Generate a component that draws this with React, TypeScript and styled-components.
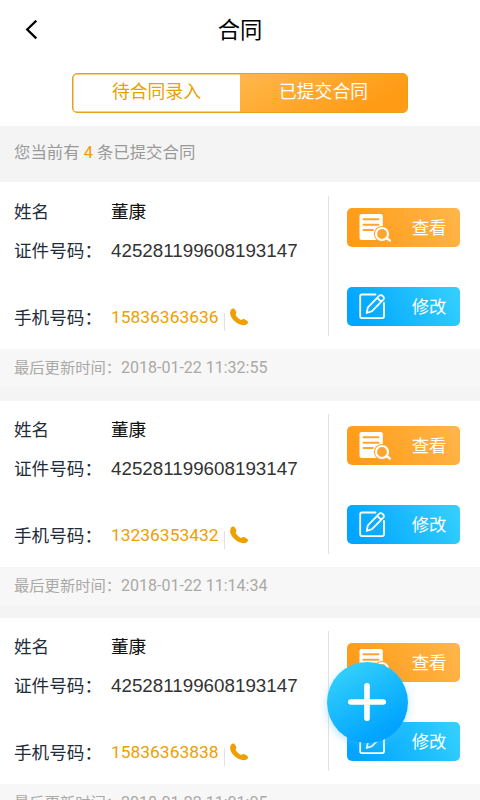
import React from 'react';
import styled, { createGlobalStyle } from 'styled-components';

const cjk = '"Noto Sans CJK SC", sans-serif';

const GlobalStyle = createGlobalStyle`
  * { box-sizing: border-box; }
  body { margin: 0; background: #fff; }
  button { border: 0; padding: 0; margin: 0; background: none; font: inherit; color: inherit; cursor: pointer; }
`;

const Screen = styled.div`
  position: relative;
  display: flex;
  flex-direction: column;
  width: 480px;
  height: 800px;
  overflow: hidden;
  background: #f4f4f4;
  font-family: Roboto, ${cjk};
`;

const Header = styled.header`
  display: grid;
  grid-template-columns: 80px 1fr 80px;
  align-items: center;
  flex: none;
  height: 60px;
  background: #fff;
`;

const BackButton = styled.button`
  display: flex;
  padding-left: 24px;
`;

const Title = styled.h1`
  margin: 0;
  padding-bottom: 4px;
  text-align: center;
  font: 400 22.3px/32px ${cjk};
  color: #000;
`;

const TabArea = styled.div`
  flex: none;
  height: 66px;
  padding: 13px 72px;
  background: #fff;
`;

const Tabs = styled.div`
  display: flex;
  height: 40px;
  border: 1px solid #e5a01c;
  border-radius: 5px;
  box-shadow: inset 0 0 0 0.5px #e5a01c;
  overflow: hidden;
`;

const Tab = styled.button<{ $active?: boolean }>`
  flex: 1;
  padding-bottom: 6px;
  font: 400 17.8px/32px ${cjk};
  color: ${(p) => (p.$active ? '#fff' : '#e9a000')};
  background: ${(p) => (p.$active ? 'linear-gradient(150deg, #ffb648 5%, #ff9b14 82%)' : 'transparent')};
`;

const Summary = styled.div`
  flex: none;
  height: 56px;
  padding: 15px 14px 0;
  font-size: 16.4px;
  line-height: 24px;
  color: #999;
  white-space: pre;
`;

const Count = styled.span`
  color: #f09c00;
`;

const Card = styled.article`
  flex: none;
  height: 217px;
`;

const CardBody = styled.div`
  display: flex;
  height: 166px;
  padding: 13px 20px 13px 14px;
  background: #fff;
`;

const ContractList = styled.main`
  flex: none;
  ${Card}:first-child { height: 219px; }
  ${Card}:first-child ${CardBody} { height: 167px; padding-top: 14px; }
`;

const Fields = styled.div`
  flex: 1;
  margin-right: -0.5px;
  border-right: 1px solid #e2e2e2;
`;

const Field = styled.div<{ $tall?: boolean }>`
  display: flex;
  align-items: center;
  height: 32px;
  margin-bottom: ${(p) => (p.$tall ? '35px' : '7px')};
`;

const Label = styled.span`
  width: 97px;
  padding-bottom: 2px;
  font: 400 17.6px/30px ${cjk};
  color: #1f2d3a;
`;

const Name = styled.span`
  padding-bottom: 2px;
  font: 400 17.6px/30px ${cjk};
  color: #111;
`;

const IdNumber = styled.span`
  font: 400 18.8px/32px "Liberation Sans", sans-serif;
  color: #333;
`;

const Phone = styled.span`
  padding-bottom: 2px;
  font: 400 17.4px/30px Roboto, sans-serif;
  color: #eea000;
`;

const CallButton = styled.button`
  display: flex;
  height: 18px;
  margin: 8px 0 0 5px;
  padding-left: 5px;
  border-left: 1px solid #e2e2e2;
  svg { margin-top: -5px; }
`;

const Actions = styled.div`
  display: flex;
  flex-direction: column;
  gap: 40px;
  padding: 12px 0 0 18.5px;
`;

const ActionButton = styled.button<{ $blue?: boolean }>`
  display: flex;
  align-items: center;
  justify-content: space-between;
  width: 113.5px;
  height: 39px;
  padding: 0 13.5px 1px 12px;
  border-radius: 5px;
  color: #fff;
  font: 400 17.4px/38px ${cjk};
  background: ${(p) =>
    p.$blue
      ? 'linear-gradient(60deg, #00a5ff 10%, #33cffc 95%)'
      : 'linear-gradient(60deg, #ff9b17 10%, #ffb548 95%)'};
`;

const Updated = styled.div`
  height: 38px;
  padding: 6px 14px 0;
  background: #f7f7f7;
  font-size: 16px;
  line-height: 26px;
  color: #aaa9a6;
  display: flex;
`;

const UpdatedLabel = styled.span`
  flex: none;
  width: 107px;
  margin-top: -2px;
  font-family: ${cjk};
  font-size: 15.3px;
  white-space: nowrap;
`;

const AddButton = styled.button`
  position: absolute;
  left: 326.5px;
  top: 661.5px;
  display: flex;
  align-items: center;
  justify-content: center;
  width: 81px;
  height: 81px;
  border-radius: 50%;
  background: linear-gradient(150deg, #32cffb 12%, #00a3ff 82%);
  box-shadow: 0 3px 8px rgba(80, 190, 255, 0.4);
`;

const BackIcon = () => (
  <svg width="14" height="20" viewBox="0 0 14 20" fill="none" stroke="#000" strokeWidth="2.3">
    <path d="M12.3.7 3.2 9.5l9.1 8.9" />
  </svg>
);

const PhoneIcon = () => (
  <svg width="18" height="18" viewBox="0 0 18 18" fill="#eea000">
    <path d="M1 1.7C1.7.6 3.300-.1 4.300.8l1.700 2.600c.6 1 .4 1.900-.1 2.500-.4.5-.3 1.200.2 1.900 1 1.500 2.300 2.700 3.900 3.700.8.5 1.500.5 2.100 0 .8-.6 1.600-.7 2.500-.2l2.700 1.600c1.300.9.5 2.600-.5 3.400-1.800 1.300-4.300 1.100-6.300.2C5.700 15 1.900 11.300.5 7.200-.1 5.400 0 3.300 1 1.700Z" />
  </svg>
);

const ViewIcon = () => (
  <svg width="33" height="30" viewBox="0 0 33 30" fill="none">
    <rect x=".5" y="2" width="23.300" height="26" rx="2" fill="#fff" />
    <path d="M4.500 7.200h15M4.500 12.700h15M4.500 18H14" stroke="#ffa52d" strokeWidth="1.900" strokeLinecap="round" />
    <circle cx="23" cy="22" r="8.100" fill="#ffa52d" />
    <circle cx="23" cy="22" r="6" stroke="#fff" strokeWidth="2.200" />
    <path d="m27.500 26 3.400 2.600" stroke="#fff" strokeWidth="2.400" strokeLinecap="round" />
  </svg>
);

const EditIcon = () => (
  <svg width="33" height="30" viewBox="0 0 33 30" fill="none" stroke="#fff" strokeWidth="1.800" strokeLinejoin="round">
    <path d="M16.500 3.500H3a1.800 1.800 0 0 0-1.800 1.800v20A1.800 1.800 0 0 0 3 27.100h20.200a1.800 1.800 0 0 0 1.800-1.800V12" strokeLinecap="round" />
    <path d="m7.700 22 1.200-5.700L20.300 4.700a2.100 2.100 0 0 1 3 0l1 1a2.100 2.100 0 0 1 0 3L13 20.200 7.700 22ZM18.300 6.800l4 4" />
  </svg>
);

const PlusIcon = () => (
  <svg width="40" height="40" viewBox="0 0 40 40" stroke="#fff" strokeWidth="5.600" strokeLinecap="round">
    <path d="M20 3.800v32.400M3.800 20h32.400" />
  </svg>
);

const contracts = [
  { phone: '15836363636', updated: '2018-01-22 11:32:55' },
  { phone: '13236353432', updated: '2018-01-22 11:14:34' },
  { phone: '15836363838', updated: '2018-01-22 11:01:05' },
];

export default function App() {
  return (
    <>
      <GlobalStyle />
      <Screen>
        <Header>
          <BackButton aria-label="返回"><BackIcon /></BackButton>
          <Title>合同</Title>
        </Header>
        <TabArea>
          <Tabs>
            <Tab>待合同录入</Tab>
            <Tab $active>已提交合同</Tab>
          </Tabs>
        </TabArea>
        <Summary>您当前有 <Count>4</Count> 条已提交合同</Summary>
        <ContractList>
          {contracts.map((c) => (
            <Card key={c.phone}>
              <CardBody>
                <Fields>
                  <Field>
                    <Label>姓名</Label>
                    <Name>董康</Name>
                  </Field>
                  <Field $tall>
                    <Label>证件号码：</Label>
                    <IdNumber>425281199608193147</IdNumber>
                  </Field>
                  <Field>
                    <Label>手机号码：</Label>
                    <Phone>{c.phone}</Phone>
                    <CallButton aria-label="拨打"><PhoneIcon /></CallButton>
                  </Field>
                </Fields>
                <Actions>
                  <ActionButton><ViewIcon />查看</ActionButton>
                  <ActionButton $blue><EditIcon />修改</ActionButton>
                </Actions>
              </CardBody>
              <Updated>
                <UpdatedLabel>最后更新时间：</UpdatedLabel>
                {c.updated}
              </Updated>
            </Card>
          ))}
        </ContractList>
        <AddButton aria-label="新增"><PlusIcon /></AddButton>
      </Screen>
    </>
  );
}
